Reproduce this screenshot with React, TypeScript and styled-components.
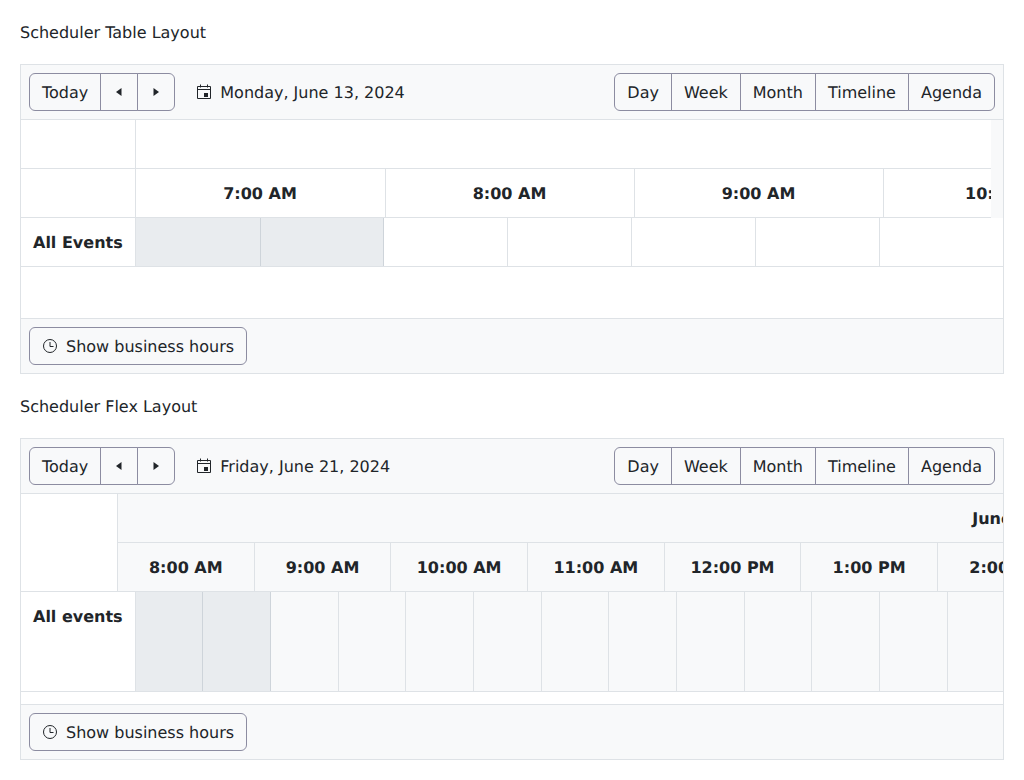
import styled, { createGlobalStyle } from "styled-components";

const GlobalStyle = createGlobalStyle`
  * {
    box-sizing: border-box;
  }
  body {
    margin: 0;
    background: #fff;
    color: #212529;
    font-family: "DejaVu Sans", sans-serif;
    font-size: 16px;
    line-height: 1.5;
    text-rendering: geometricPrecision;
  }
`;

const Page = styled.div`
  padding: 20px 20px 0;
`;

const Title = styled.div`
  margin-bottom: 20px;
`;

// DejaVu sits a pixel high in its line box, this puts the baseline back
const Text = styled.span`
  display: inline-block;
  transform: translateY(1px);
`;

const Scheduler = styled.div`
  border: 1px solid #dee2e6;
  margin-bottom: 20px;
  overflow: hidden;
`;

const Toolbar = styled.div`
  display: flex;
  align-items: center;
  height: 55px;
  padding: 0 8px 1px;
  background: #f8f9fa;
  border-bottom: 1px solid #dee2e6;
`;

const Group = styled.div`
  display: inline-flex;
`;

const Button = styled.button`
  display: inline-flex;
  align-items: center;
  gap: 8px;
  height: 38px;
  padding: 6px 12px;
  background: #f8f9fa;
  border: 1px solid #8c8ca1;
  border-radius: 6px;
  color: #212529;
  font: inherit;
  text-rendering: inherit;
  white-space: nowrap;
`;

const GroupButton = styled(Button)`
  border-radius: 0;
  margin-left: -1px;

  &:first-child {
    margin-left: 0;
    border-radius: 6px 0 0 6px;
  }
  &:last-child {
    border-radius: 0 6px 6px 0;
  }
`;

const NavButton = styled(GroupButton)`
  padding: 6px 10px;
`;

const DateButton = styled(Button)`
  margin-left: 8px;
  background: transparent;
  border-color: transparent;
`;

const Spacer = styled.div`
  flex: 1;
`;

const Footer = styled.div`
  display: flex;
  align-items: center;
  height: 54px;
  padding: 0 8px;
  background: #f8f9fa;
`;

const HeadWrap = styled.div`
  display: flex;
  height: 98px;
`;

const HeadScroll = styled.div`
  flex: 1;
  min-width: 0;
  overflow: hidden;
`;

const Gutter = styled.div`
  flex: 0 0 12px;
  background: #f8f9fa;
`;

const Row = styled.div<{ $height?: number; $bg?: string }>`
  display: flex;
  height: ${(p) => p.$height ?? 49}px;
  overflow: hidden;
  background: ${(p) => p.$bg ?? "#fff"};
  border-bottom: 1px solid #dee2e6;
`;

const Corner = styled.div<{ $width: number }>`
  flex: 0 0 ${(p) => p.$width}px;
  border-right: 1px solid #dee2e6;
  background: #fff;
`;

const RowLabel = styled(Corner)`
  padding: 12px 12px 0;
  font-weight: 700;
  white-space: nowrap;
`;

const TimeCell = styled.div<{ $width: number }>`
  flex: 0 0 ${(p) => p.$width}px;
  display: flex;
  align-items: center;
  justify-content: center;
  font-weight: 700;
  white-space: nowrap;
  border-right: 1px solid #dee2e6;
`;

const TableTimeCell = styled(TimeCell)`
  padding-right: 1px;
`;

const DateCell = styled.div<{ $width: number }>`
  flex: 0 0 ${(p) => p.$width}px;
  display: flex;
  align-items: center;
  justify-content: center;
  font-weight: 700;
  white-space: nowrap;
`;

const SlotCell = styled.div<{ $width: number; $off?: boolean; $bg?: string }>`
  flex: 0 0 ${(p) => p.$width}px;
  background: ${(p) => (p.$off ? "#e9ecef" : (p.$bg ?? "#fff"))};
  border-right: 1px solid ${(p) => (p.$off ? "#ced4da" : "#dee2e6")};
`;

const FlexHead = styled.div`
  display: flex;
  height: 98px;
  border-bottom: 1px solid #dee2e6;
`;

const FlexHeadCols = styled.div`
  flex: 1;
  min-width: 0;
  overflow: hidden;
  background: #f8f9fa;
`;

const FlexHeadRow = styled.div`
  display: flex;
  height: 49px;
  border-bottom: 1px solid #dee2e6;

  &:last-child {
    height: 48px;
    border-bottom: 0;
  }
`;

const Blank = styled.div<{ $height: number }>`
  height: ${(p) => p.$height}px;
  background: #fff;
  border-bottom: 1px solid #dee2e6;
`;

const CalendarIcon = () => (
  <svg width="16" height="16" viewBox="0 0 16 16" fill="none" aria-hidden="true">
    <path d="M1.5 2.5h13v12h-13zM1.5 5.5h13M4.5 0.5v3M11.5 0.5v3" stroke="#212529" />
    <rect x="8" y="9" width="4" height="4" fill="#212529" />
  </svg>
);

const ClockIcon = () => (
  <svg width="16" height="16" viewBox="0 0 16 16" fill="none" aria-hidden="true">
    <circle cx="8" cy="8" r="6.5" stroke="#212529" />
    <path d="M8 4v4.5h3.5" stroke="#212529" />
  </svg>
);

const CaretLeft = () => (
  <svg width="16" height="16" viewBox="0 0 16 16" aria-hidden="true">
    <path d="M5 8l5.5-4v8z" fill="#212529" />
  </svg>
);

const CaretRight = () => (
  <svg width="16" height="16" viewBox="0 0 16 16" aria-hidden="true">
    <path d="M11 8L5.5 4v8z" fill="#212529" />
  </svg>
);

const views = ["Day", "Week", "Month", "Timeline", "Agenda"];

const SchedulerToolbar = ({ date }: { date: string }) => (
  <Toolbar>
    <Group>
      <GroupButton>
        <Text>Today</Text>
      </GroupButton>
      <NavButton>
        <CaretLeft />
      </NavButton>
      <NavButton>
        <CaretRight />
      </NavButton>
    </Group>
    <DateButton>
      <CalendarIcon />
      <Text>{date}</Text>
    </DateButton>
    <Spacer />
    <Group>
      {views.map((v) => (
        <GroupButton key={v}>
          <Text>{v}</Text>
        </GroupButton>
      ))}
    </Group>
  </Toolbar>
);

const SchedulerFooter = () => (
  <Footer>
    <Button>
      <ClockIcon />
      <Text>Show business hours</Text>
    </Button>
  </Footer>
);

const tableHours = ["7:00 AM", "8:00 AM", "9:00 AM", "10:00 AM"];
const tableSlots = [125, 123, 124, 124, 124, 124, 124];
const flexHours = ["8:00 AM", "9:00 AM", "10:00 AM", "11:00 AM", "12:00 PM", "1:00 PM", "2:00 PM"];

export default function App() {
  return (
    <Page>
      <GlobalStyle />
      <Title>
        <Text>Scheduler Table Layout</Text>
      </Title>
      <Scheduler>
        <SchedulerToolbar date="Monday, June 13, 2024" />
        <HeadWrap>
          <HeadScroll>
            <Row>
              <Corner $width={115} />
            </Row>
            <Row>
              <Corner $width={115} />
              {tableHours.map((h, i) => (
                <TableTimeCell key={h} $width={i === 0 ? 250 : 249}>
                  <Text>{h}</Text>
                </TableTimeCell>
              ))}
            </Row>
          </HeadScroll>
          <Gutter />
        </HeadWrap>
        <Row>
          <RowLabel $width={115}>
            <Text>All Events</Text>
          </RowLabel>
          {tableSlots.map((w, i) => (
            <SlotCell key={i} $width={w} $off={i < 2} />
          ))}
        </Row>
        <Blank $height={52} />
        <SchedulerFooter />
      </Scheduler>

      <Title>
        <Text>Scheduler Flex Layout</Text>
      </Title>
      <Scheduler>
        <SchedulerToolbar date="Friday, June 21, 2024" />
        <FlexHead>
          <Corner $width={97} />
          <FlexHeadCols>
            <FlexHeadRow>
              <DateCell $width={1832}>
                <Text>June 21, 2024</Text>
              </DateCell>
            </FlexHeadRow>
            <FlexHeadRow>
              {flexHours.map((h) => (
                <TimeCell key={h} $width={136.67}>
                  <Text>{h}</Text>
                </TimeCell>
              ))}
            </FlexHeadRow>
          </FlexHeadCols>
        </FlexHead>
        <Row $height={100} $bg="#f8f9fa">
          <RowLabel $width={114.5}>
            <Text>All events</Text>
          </RowLabel>
          {Array.from({ length: 14 }, (_, i) => (
            <SlotCell key={i} $width={67.67} $off={i < 2} $bg="#f8f9fa" />
          ))}
        </Row>
        <Blank $height={13} />
        <SchedulerFooter />
      </Scheduler>
    </Page>
  );
}
